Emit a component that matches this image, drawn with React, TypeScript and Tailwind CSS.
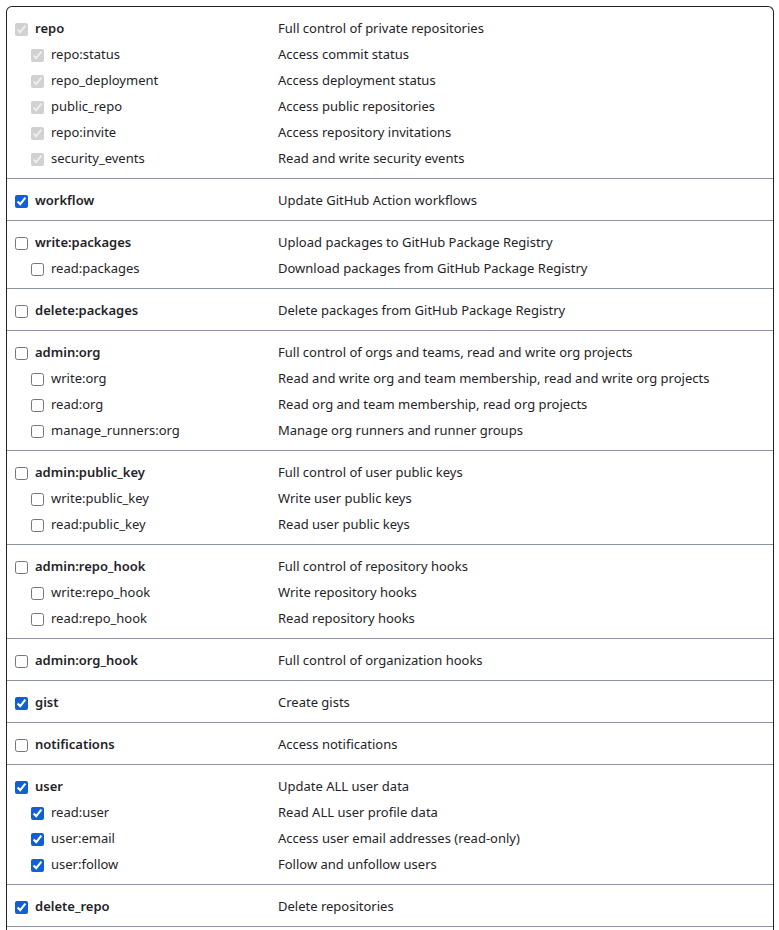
type Scope = { name: string; desc: string; checked: boolean; disabled?: boolean };
type Group = { main: Scope; subs?: Scope[] };

const groups: Group[] = [
  {
    main: { name: "repo", desc: "Full control of private repositories", checked: true, disabled: true },
    subs: [
      { name: "repo:status", desc: "Access commit status", checked: true, disabled: true },
      { name: "repo_deployment", desc: "Access deployment status", checked: true, disabled: true },
      { name: "public_repo", desc: "Access public repositories", checked: true, disabled: true },
      { name: "repo:invite", desc: "Access repository invitations", checked: true, disabled: true },
      { name: "security_events", desc: "Read and write security events", checked: true, disabled: true },
    ],
  },
  { main: { name: "workflow", desc: "Update GitHub Action workflows", checked: true } },
  {
    main: { name: "write:packages", desc: "Upload packages to GitHub Package Registry", checked: false },
    subs: [{ name: "read:packages", desc: "Download packages from GitHub Package Registry", checked: false }],
  },
  { main: { name: "delete:packages", desc: "Delete packages from GitHub Package Registry", checked: false } },
  {
    main: { name: "admin:org", desc: "Full control of orgs and teams, read and write org projects", checked: false },
    subs: [
      { name: "write:org", desc: "Read and write org and team membership, read and write org projects", checked: false },
      { name: "read:org", desc: "Read org and team membership, read org projects", checked: false },
      { name: "manage_runners:org", desc: "Manage org runners and runner groups", checked: false },
    ],
  },
  {
    main: { name: "admin:public_key", desc: "Full control of user public keys", checked: false },
    subs: [
      { name: "write:public_key", desc: "Write user public keys", checked: false },
      { name: "read:public_key", desc: "Read user public keys", checked: false },
    ],
  },
  {
    main: { name: "admin:repo_hook", desc: "Full control of repository hooks", checked: false },
    subs: [
      { name: "write:repo_hook", desc: "Write repository hooks", checked: false },
      { name: "read:repo_hook", desc: "Read repository hooks", checked: false },
    ],
  },
  { main: { name: "admin:org_hook", desc: "Full control of organization hooks", checked: false } },
  { main: { name: "gist", desc: "Create gists", checked: true } },
  { main: { name: "notifications", desc: "Access notifications", checked: false } },
  {
    main: { name: "user", desc: "Update ALL user data", checked: true },
    subs: [
      { name: "read:user", desc: "Read ALL user profile data", checked: true },
      { name: "user:email", desc: "Access user email addresses (read-only)", checked: true },
      { name: "user:follow", desc: "Follow and unfollow users", checked: true },
    ],
  },
  { main: { name: "delete_repo", desc: "Delete repositories", checked: true } },
];

function Row({ scope, sub }: { scope: Scope; sub?: boolean }) {
  return (
    <div className="flex h-[26px] items-center">
      <label className={`flex w-[271px] shrink-0 items-center ${sub ? "pl-[24px]" : "pl-[8px]"}`}>
        <input
          type="checkbox"
          defaultChecked={scope.checked}
          disabled={scope.disabled}
          className="m-0 h-[13px] w-[13px] accent-[#0f5fd7]"
        />
        <span className={`ml-[7px] ${sub ? "" : "font-semibold"}`}>{scope.name}</span>
      </label>
      <span>{scope.desc}</span>
    </div>
  );
}

export default function App() {
  return (
    <div
      className="min-h-screen bg-white pl-[6px] pr-[5px] pt-[6px] text-[13px] text-[#1f2328]"
      style={{ fontFamily: '"Noto Sans", "Open Sans", sans-serif' }}
    >
      <div className="rounded-t-[6px] border-x border-t border-[#1f2328]">
        {groups.map((g, i) => (
          <div
            key={g.main.name}
            className={`pb-[6px] ${i === 0 ? "pt-[9px]" : "border-t border-[#8c959f] pt-[9px]"}`}
          >
            <Row scope={g.main} />
            {g.subs?.map((s) => <Row key={s.name} scope={s} sub />)}
          </div>
        ))}
        <div className="h-[30px] border-t border-[#8c959f]" />
      </div>
    </div>
  );
}
